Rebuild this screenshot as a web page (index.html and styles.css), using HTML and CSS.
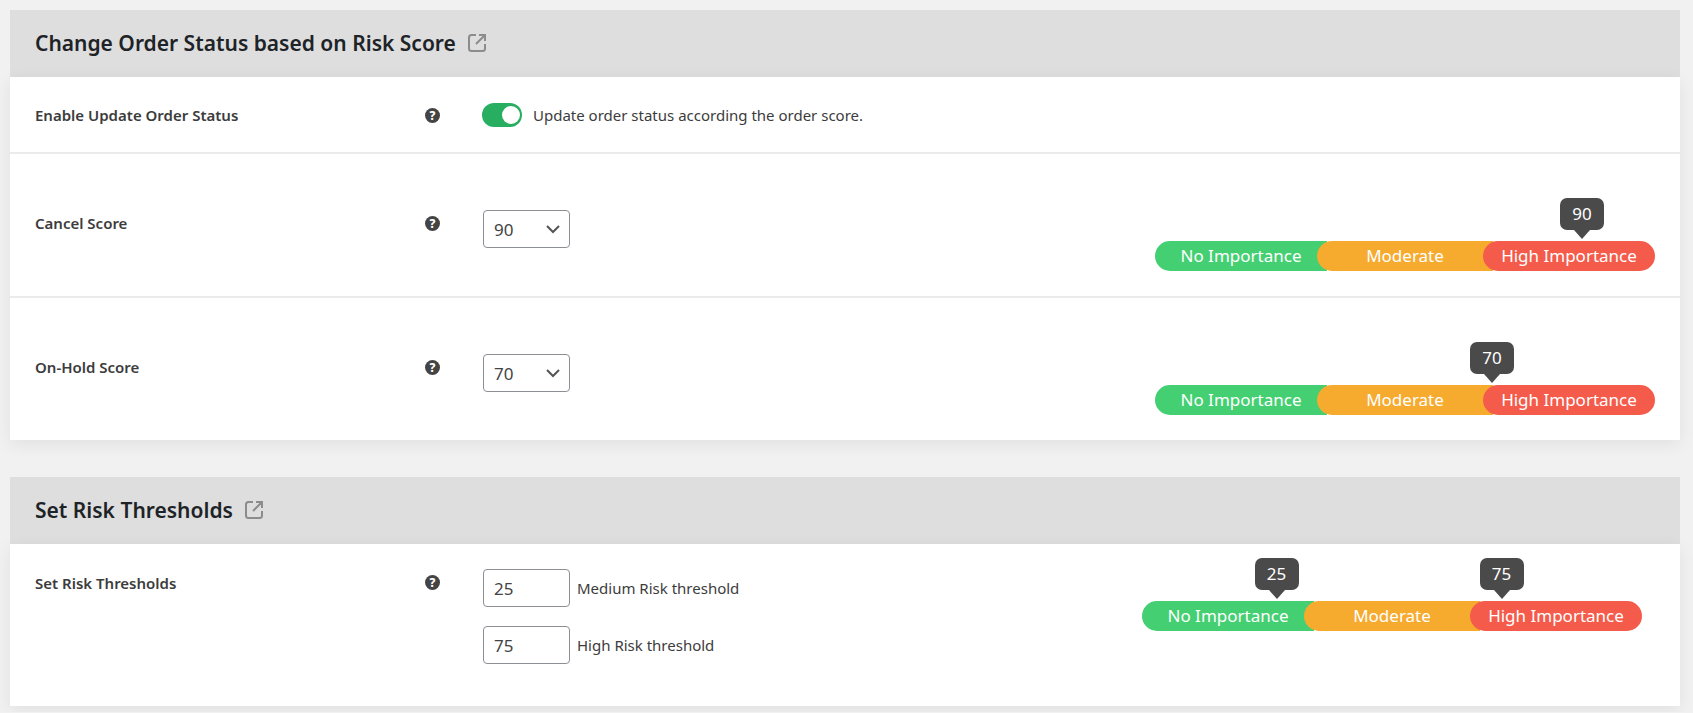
FILE: index.html
```html
<!DOCTYPE html>
<html lang="en">
<head>
  <meta charset="UTF-8" />
  <meta name="viewport" content="width=device-width, initial-scale=1" />
  <title>Risk Score Settings</title>
  <link rel="stylesheet" href="styles.css">
</head>
<body>

  <form class="settings">

    <section class="panel">
      <header class="panel-header">
        <h2>Change Order Status based on Risk Score</h2>
        <a href="#" class="doc-link" aria-label="Open documentation">
          <svg width="18" height="18" viewBox="0 0 18 18">
            <path d="M8 1H3.500Q1 1 1 3.500V14.500Q1 17 3.500 17H14.500Q17 17 17 14.500V10M11 1H17V7M17 1L8 10" />
          </svg>
        </a>
      </header>

      <div class="panel-body">
        <div class="row">
          <label class="row-label" for="enable-status">Enable Update Order Status</label>
          <button type="button" class="help" aria-label="Help">?</button>
          <div class="field">
            <input type="checkbox" id="enable-status" class="toggle" checked>
            <label class="hint" for="enable-status">Update order status according the order score.</label>
          </div>
        </div>

        <div class="row row-score">
          <label class="row-label" for="cancel-score">Cancel Score</label>
          <button type="button" class="help" aria-label="Help">?</button>
          <div class="field">
            <div class="select-wrap">
              <select id="cancel-score" class="control">
                <option>70</option>
                <option>80</option>
                <option selected>90</option>
              </select>
              <svg class="chevron" width="14" height="9" viewBox="0 0 14 9"><path d="M1 1l6 6 6-6" /></svg>
            </div>
          </div>
          <div class="scale">
            <span class="marker" style="left: 81%">90</span>
            <span class="level level-low">No Importance</span>
            <span class="level level-mid">Moderate</span>
            <span class="level level-high">High Importance</span>
          </div>
        </div>

        <div class="row row-score">
          <label class="row-label" for="hold-score">On-Hold Score</label>
          <button type="button" class="help" aria-label="Help">?</button>
          <div class="field">
            <div class="select-wrap">
              <select id="hold-score" class="control">
                <option>60</option>
                <option selected>70</option>
                <option>80</option>
              </select>
              <svg class="chevron" width="14" height="9" viewBox="0 0 14 9"><path d="M1 1l6 6 6-6" /></svg>
            </div>
          </div>
          <div class="scale">
            <span class="marker" style="left: 63%">70</span>
            <span class="level level-low">No Importance</span>
            <span class="level level-mid">Moderate</span>
            <span class="level level-high">High Importance</span>
          </div>
        </div>
      </div>
    </section>

    <section class="panel">
      <header class="panel-header">
        <h2>Set Risk Thresholds</h2>
        <a href="#" class="doc-link" aria-label="Open documentation">
          <svg width="18" height="18" viewBox="0 0 18 18">
            <path d="M8 1H3.500Q1 1 1 3.500V14.500Q1 17 3.500 17H14.500Q17 17 17 14.500V10M11 1H17V7M17 1L8 10" />
          </svg>
        </a>
      </header>

      <div class="panel-body">
        <div class="row row-thresholds">
          <label class="row-label" for="medium-risk">Set Risk Thresholds</label>
          <button type="button" class="help" aria-label="Help">?</button>
          <div class="field-list">
            <div class="field">
              <input type="text" inputmode="numeric" id="medium-risk" class="control" value="25">
              <label class="hint" for="medium-risk">Medium Risk threshold</label>
            </div>
            <div class="field">
              <input type="text" inputmode="numeric" id="high-risk" class="control" value="75">
              <label class="hint" for="high-risk">High Risk threshold</label>
            </div>
          </div>
          <div class="scale">
            <span class="marker" style="left: 22.5%">25</span>
            <span class="marker" style="left: 67.5%">75</span>
            <span class="level level-low">No Importance</span>
            <span class="level level-mid">Moderate</span>
            <span class="level level-high">High Importance</span>
          </div>
        </div>
      </div>
    </section>

  </form>

</body>
</html>
```
FILE: styles.css
```css
* {
  box-sizing: border-box;
}

body {
  margin: 0;
  background: #f1f1f1;
  color: #3c3c3c;
  font-family: 'Segoe UI', 'Noto Sans', sans-serif;
  font-size: 15px;
}

.settings {
  display: flex;
  flex-direction: column;
  gap: 37px;
  padding: 10px 13px 6px 10px;
}

.panel-header {
  display: flex;
  align-items: center;
  gap: 12px;
  height: 67px;
  padding: 0 25px 2px;
  background: #dedede;
}

.panel-header h2 {
  margin: 0;
  color: #1d2327;
  font-size: 21px;
  font-weight: 600;
  line-height: 32px;
}

.doc-link {
  display: flex;
}

.doc-link svg {
  fill: none;
  stroke: #8c8c8c;
  stroke-width: 2;
}

.panel-body {
  position: relative;
  background: #fff;
  box-shadow: 0 4px 16px rgba(0, 0, 0, 0.07);
}

.row {
  display: grid;
  grid-template-columns: 390px 57px 1fr 500px;
  align-items: center;
  padding: 24px 25px 23px;
  border-bottom: 2px solid #ebebeb;
}

.row:last-child {
  border-bottom: none;
}

.row-label {
  font-weight: 600;
  line-height: 28px;
}

.help {
  width: 15px;
  height: 15px;
  padding: 0;
  border: none;
  border-radius: 50%;
  background: #444;
  color: #fff;
  font-family: inherit;
  font-size: 12px;
  font-weight: 800;
  line-height: 15px;
  cursor: pointer;
}

.field {
  display: flex;
  align-items: center;
}

.hint {
  line-height: 28px;
}

/* toggle switch */
.toggle {
  appearance: none;
  width: 40px;
  height: 24px;
  margin: 0 11px 0 0;
  padding: 3px 2px;
  border-radius: 12px;
  background: #27ae60;
  cursor: pointer;
}

.toggle:not(:checked) {
  background: #ccc;
}

.toggle::before {
  content: "";
  display: block;
  width: 18px;
  height: 18px;
  border-radius: 50%;
  background: #fff;
}

.toggle:checked::before {
  margin-left: auto;
}

/* selects and text boxes */
.control {
  appearance: none;
  width: 87px;
  height: 38px;
  margin: 0 1px;
  padding: 0 10px;
  border: 1px solid #8c8f94;
  border-radius: 4px;
  background: #fff;
  color: #444;
  font-family: inherit;
  font-size: 17px;
}

.select-wrap {
  position: relative;
}

.chevron {
  position: absolute;
  top: 15px;
  right: 11px;
  fill: none;
  stroke: #555;
  stroke-width: 2;
  pointer-events: none;
}

.row-score {
  padding: 25px;
}

.row-score .row-label,
.row-score .help {
  margin-bottom: 4px;
}

.row-score .field {
  padding-top: 8px;
}

.row-score .scale {
  margin-top: 62px;
}

.row-thresholds {
  align-items: start;
  padding: 25px 38px 42px 25px;
}

.row-thresholds .help {
  margin-top: 6px;
}

.row-thresholds .scale {
  margin-top: 32px;
}

.field-list {
  display: flex;
  flex-direction: column;
  gap: 19px;
}

.field-list .hint {
  margin-left: 6px;
}

/* risk scale */
.scale {
  position: relative;
  display: grid;
  grid-template-columns: 162px 1fr 172px;
  height: 30px;
  color: #fff;
  font-size: 17px;
  line-height: 30px;
  text-align: center;
}

.level-low {
  margin-right: -10px;
  border-radius: 15px 0 0 15px;
  background: #44cf72;
}

.level-mid {
  position: relative;
  margin-right: -10px;
  border-radius: 15px 0 0 15px;
  background: #f6ab2f;
}

.level-high {
  position: relative;
  border-radius: 15px;
  background: #f45b4b;
}

.marker {
  position: absolute;
  bottom: 41px;
  width: 44px;
  height: 32px;
  border-radius: 7px;
  background: #4a4a4a;
  line-height: 32px;
}

.marker::after {
  content: "";
  position: absolute;
  top: 100%;
  left: 14px;
  border: 8px solid transparent;
  border-top: 9px solid #4a4a4a;
  border-bottom: none;
}
```
